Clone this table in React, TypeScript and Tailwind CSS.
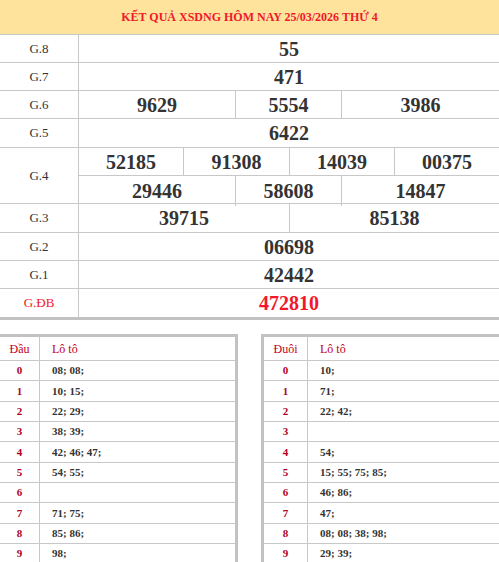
import React from "react";

type Cell = { value: string; width?: string };

const dau: [string, string][] = [
  ["0", "08; 08;"],
  ["1", "10; 15;"],
  ["2", "22; 29;"],
  ["3", "38; 39;"],
  ["4", "42; 46; 47;"],
  ["5", "54; 55;"],
  ["6", ""],
  ["7", "71; 75;"],
  ["8", "85; 86;"],
  ["9", "98;"],
];

const duoi: [string, string][] = [
  ["0", "10;"],
  ["1", "71;"],
  ["2", "22; 42;"],
  ["3", ""],
  ["4", "54;"],
  ["5", "15; 55; 75; 85;"],
  ["6", "46; 86;"],
  ["7", "47;"],
  ["8", "08; 08; 38; 98;"],
  ["9", "29; 39;"],
];

// One line of numbers, split into fixed-width cells like the old colspan table
const NumberLine = ({ cells, red = false }: { cells: Cell[]; red?: boolean }) => (
  <div className="flex h-full">
    {cells.map((c, i) => (
      <div
        key={i}
        className={`${c.width ?? "flex-1"} flex items-center justify-center text-[20px] font-bold ${
          red ? "text-[#f3172b]" : "text-[#333]"
        } ${i < cells.length - 1 ? "border-r border-[#c8c8c8]" : ""}`}
      >
        {c.value}
      </div>
    ))}
  </div>
);

const PrizeRow = ({
  label,
  cells,
  height,
  red = false,
}: {
  label: string;
  cells: Cell[];
  height: string;
  red?: boolean;
}) => (
  <div className={`flex ${height} border-b border-[#c8c8c8]`}>
    <div
      className={`w-[79px] shrink-0 border-r border-[#c8c8c8] flex items-center justify-center text-[13px] ${
        red ? "text-[#f3172b]" : "text-[#333]"
      }`}
    >
      {label}
    </div>
    <div className="flex-1">
      <NumberLine cells={cells} red={red} />
    </div>
  </div>
);

const LotoTable = ({
  title,
  rows,
  side,
}: {
  title: string;
  rows: [string, string][];
  side: "left" | "right";
}) => {
  const firstCol = side === "left" ? "w-[40px]" : "w-[44px]";
  return (
    <div
      className={`w-[238px] border-t-[3px] border-[#c2c2c2] ${
        side === "left" ? "border-r-[3px]" : "border-l-[3px]"
      }`}
    >
      <div className="flex h-[24px] border-b border-[#c8c8c8] text-[12px] text-[#c4001b]">
        <div className={`${firstCol} shrink-0 border-r border-[#c8c8c8] flex items-center justify-center`}>
          {title}
        </div>
        <div className="flex-1 flex items-center pl-[12px]">Lô tô</div>
      </div>
      {rows.map(([k, v]) => (
        <div key={k} className="flex h-[20.33px] border-b border-[#c8c8c8] text-[11px] font-bold">
          <div
            className={`${firstCol} shrink-0 border-r border-[#c8c8c8] flex items-center justify-center text-[#b0001e]`}
          >
            {k}
          </div>
          <div className="flex-1 flex items-center pl-[12px] text-[#333]">{v}</div>
        </div>
      ))}
    </div>
  );
};

export default function App() {
  return (
    <div className="w-[499px] h-[562px] overflow-hidden bg-white font-['Liberation_Serif',serif]">
      {/* Header */}
      <div className="h-[34px] bg-[#fee39c] flex items-center justify-center text-[12px] font-bold text-[#f0182a]">
        KẾT QUẢ XSDNG HÔM NAY 25/03/2026 THỨ 4
      </div>

      {/* Prize table */}
      <div className="border-t border-[#c8c8c8] border-b-[3px] border-b-[#c2c2c2]">
        <PrizeRow label="G.8" height="h-[28px]" cells={[{ value: "55" }]} />
        <PrizeRow label="G.7" height="h-[28px]" cells={[{ value: "471" }]} />
        <PrizeRow
          label="G.6"
          height="h-[28px]"
          cells={[
            { value: "9629", width: "w-[157px]" },
            { value: "5554", width: "w-[106px]" },
            { value: "3986" },
          ]}
        />
        <PrizeRow label="G.5" height="h-[29px]" cells={[{ value: "6422" }]} />

        {/* G.4 spans two lines */}
        <div className="flex h-[56px] border-b border-[#c8c8c8]">
          <div className="w-[79px] shrink-0 border-r border-[#c8c8c8] flex items-center justify-center text-[13px] text-[#333]">
            G.4
          </div>
          <div className="flex-1 flex flex-col">
            <div className="h-[28px] border-b border-[#c8c8c8]">
              <NumberLine
                cells={[
                  { value: "52185", width: "w-[105px]" },
                  { value: "91308", width: "w-[106px]" },
                  { value: "14039", width: "w-[105px]" },
                  { value: "00375" },
                ]}
              />
            </div>
            <div className="flex-1">
              <NumberLine
                cells={[
                  { value: "29446", width: "w-[157px]" },
                  { value: "58608", width: "w-[106px]" },
                  { value: "14847" },
                ]}
              />
            </div>
          </div>
        </div>

        <PrizeRow
          label="G.3"
          height="h-[29px]"
          cells={[{ value: "39715", width: "w-[211px]" }, { value: "85138" }]}
        />
        <PrizeRow label="G.2" height="h-[28px]" cells={[{ value: "06698" }]} />
        <PrizeRow label="G.1" height="h-[28px]" cells={[{ value: "42442" }]} />
        <div className="flex h-[28px]">
          <div className="w-[79px] shrink-0 border-r border-[#c8c8c8] flex items-center justify-center text-[13px] text-[#f3172b]">
            G.ĐB
          </div>
          <div className="flex-1">
            <NumberLine cells={[{ value: "472810" }]} red />
          </div>
        </div>
      </div>

      {/* Loto tables */}
      <div className="mt-[14px] flex justify-between">
        <LotoTable title="Đầu" rows={dau} side="left" />
        <LotoTable title="Đuôi" rows={duoi} side="right" />
      </div>
    </div>
  );
}
